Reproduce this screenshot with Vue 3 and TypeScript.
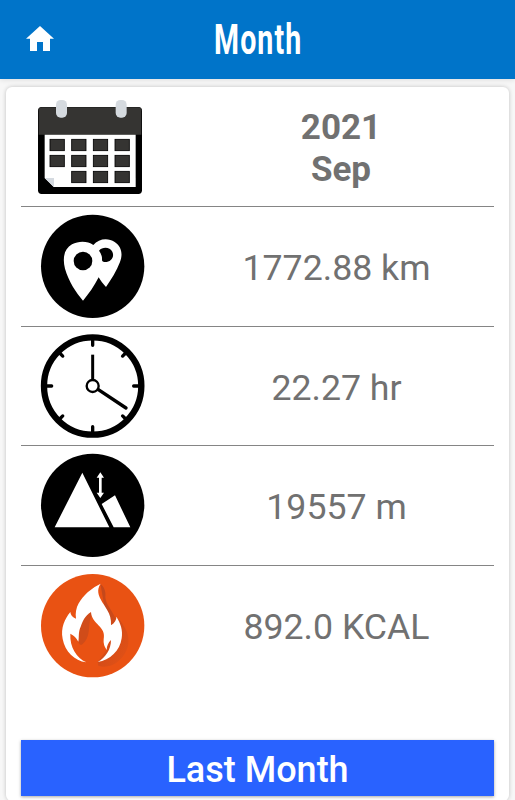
<script setup lang="ts">
interface Stat {
  icon: 'distance' | 'time' | 'climb' | 'energy'
  value: string
}

const stats: Stat[] = [
  { icon: 'distance', value: '1772.88 km' },
  { icon: 'time', value: '22.27 hr' },
  { icon: 'climb', value: '19557 m' },
  { icon: 'energy', value: '892.0 KCAL' },
]

const dateCells: [number, number][] = []
for (let row = 0; row < 3; row++) {
  for (let col = 0; col < 4; col++) {
    if (row < 2 || col > 0) dateCells.push([74 + col * 65, 147 + row * 48])
  }
}
const diagonals: number[] = [45, 135, 225, 315]
</script>

<template>
  <div class="screen">
    <header class="bar">
      <svg class="home" viewBox="0 0 28 25" aria-label="Home">
        <path d="M14 0 0 12.8h4V25h7v-9h6v9h7V12.8h4z" fill="#fff" />
      </svg>
      <h1 class="title">Month</h1>
    </header>
    <main class="card">
      <section class="row first">
        <svg class="icon" viewBox="15 -9 390 357">
          <rect x="39" y="51" width="312" height="261" rx="11" fill="#000" />
          <path d="M41 134V61q0-9 9-9h290q9 0 9 9v73z" fill="#353432" />
          <path d="M59 134h273v157H86l-27-27z" fill="#fff" />
          <path d="M59 264h28v27z" fill="#d5dae0" />
          <g fill="#353432" stroke="#000" stroke-width="2.5">
            <rect v-for="([x, y], i) in dateCells" :key="i" :x="x + 1" :y="y + 1" width="43" height="34" />
          </g>
          <rect x="93" y="30" width="33" height="53" rx="14" fill="#d5dadf" />
          <rect x="272" y="30" width="33" height="53" rx="14" fill="#d5dadf" />
        </svg>
        <div class="value date"><span>2021</span><span>Sep</span></div>
      </section>
      <section v-for="stat in stats" :key="stat.icon" class="row">
        <svg v-if="stat.icon === 'distance'" class="icon" viewBox="0 6 390 357">
          <circle cx="188" cy="184" r="155" />
          <path d="M190 120C206 101 234 98 254 111C275 125 279 148 270 171C260 198 244 223 228 246C219 237 212 227 206 217C193 243 176 267 159 287C139 263 116 230 105 191C97 159 102 132 126 118C147 107 173 108 190 120Z" fill="#fff" />
          <circle cx="159" cy="168" r="28" />
          <path d="M207 137C218 124 240 126 247 140C255 157 241 173 222 171Q216 170 216 166Q217 149 207 137Z" />
        </svg>
        <svg v-else-if="stat.icon === 'time'" class="icon" viewBox="0 7 390 357">
          <circle cx="188" cy="184" r="146" fill="#fff" stroke="#000" stroke-width="19" />
          <g stroke="#000" stroke-width="10" stroke-linecap="round">
            <path d="M188 44v18M188 306v18M48 184h17M311 184h17" />
            <path v-for="angle in diagonals" :key="angle" d="M188 44v13" :transform="`rotate(${angle} 188 184)`" />
          </g>
          <path d="M188 90v77" stroke="#000" stroke-width="9" />
          <path d="M204 194l84 56" stroke="#000" stroke-width="10" stroke-linecap="round" />
          <circle cx="188" cy="184" r="18" fill="#fff" stroke="#000" stroke-width="7" />
        </svg>
        <svg v-else-if="stat.icon === 'climb'" class="icon" viewBox="0 4 390 357">
          <circle cx="188" cy="182" r="155" />
          <path d="M157 84 74 248h164zM215 178l40-26 46 96h-50z" fill="#fff" />
          <path d="M211 83l11 16h-7v45h7l-11 16-11-16h7V99h-7z" fill="#fff" />
        </svg>
        <svg v-else class="icon" viewBox="0 9 390 357">
          <defs>
            <linearGradient id="flame-shade" x1="0" y1="0" x2="0.6" y2="1">
              <stop offset="0.3" stop-color="#c5481b" />
              <stop offset="1" stop-color="#df5016" />
            </linearGradient>
          </defs>
          <circle cx="188" cy="188" r="155" fill="#e95213" />
          <path d="M211 62C225 74 228 88 226 103C228 124 246 143 255 163L272 174C286 198 300 212 294 249C282 294 239 321 205 308L203 297L230 261L240 225Z" fill="url(#flame-shade)" />
          <path d="M145 236C148 246 153 249 160 241C187 217 170 172 188 155L183 147Q157 165 151 188Z" fill="#d04c19" />
          <path d="M212 62C199 81 206 96 212 109C222 130 246 151 243 187C254 180 260 170 259 161C272 181 279 202 275 226C270 263 240 292 203 297C227 284 243 259 243 231C235 239 230 249 230 261Q219 246 221 229C230 190 185 184 183 147C164 158 158 176 152 191C144 207 148 223 145 236Q137 220 121 212C119 253 140 285 169 298C133 294 105 265 98 228C91 194 105 167 121 147Q122 161 138 167C133 133 151 109 173 88Q191 71 212 62Z" fill="#fff" />
        </svg>
        <div class="value">{{ stat.value }}</div>
      </section>
      <button class="previous" type="button">Last Month</button>
    </main>
  </div>
</template>

<style>
body {
  margin: 0;
  overflow: hidden;
}
</style>

<style scoped>
.screen {
  box-sizing: border-box;
  height: 800px;
  overflow: hidden;
  background: #f7f7f7;
  font-family: Roboto, sans-serif;
  color: #717171;
}
.bar {
  display: grid;
  grid-template-columns: 54px 1fr 54px;
  align-items: center;
  height: 79px;
  background: #0074c9;
  box-shadow: 0 1px 5px rgb(0 0 0 / 10%);
}
.home {
  width: 28px;
  height: 25px;
  margin: 0 0 2px 26px;
}
.title {
  margin: 0;
  padding-left: 2px;
  color: #fff;
  text-align: center;
  font-size: 42px;
  line-height: 77px;
  font-weight: 700;
  letter-spacing: 1.6px;
  transform: scaleX(0.68);
}
.card {
  box-sizing: border-box;
  height: 714px;
  margin: 8px 6px 0;
  padding: 0 15px;
  border-radius: 6px;
  background: #fff;
  box-shadow: 0 0 4px rgb(0 0 0 / 22%);
}
.row {
  box-sizing: border-box;
  display: grid;
  grid-template-columns: 158px 1fr;
  align-items: center;
  height: 119.67px;
  border-top: 1px solid #858585;
}
.row.first {
  height: 119px;
  border-top: 0;
}
.icon {
  display: block;
  width: 130px;
  height: 119px;
  margin-left: 9px;
}
.value {
  padding-top: 3px;
  text-align: center;
  font-size: 35.7px;
  line-height: 42px;
}
.date {
  display: flex;
  flex-direction: column;
  padding: 5px 0 0 9px;
  font-size: 35px;
  font-weight: 700;
}
.previous {
  display: block;
  width: 100%;
  height: 56px;
  margin-top: 55.5px;
  padding: 5px 0 0;
  border: 0;
  background: #2962ff;
  box-shadow: 0 1px 3px rgb(0 0 0 / 35%);
  color: #fff;
  font: 500 36px/51px Roboto, sans-serif;
}
</style>
